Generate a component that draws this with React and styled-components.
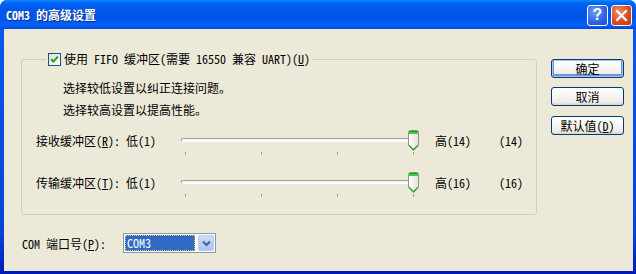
import React from "react";
import styled, { createGlobalStyle } from "styled-components";

const sliders = [
  { name: "接收缓冲区", key: "R", min: 1, max: 14, value: 14 },
  { name: "传输缓冲区", key: "T", min: 1, max: 16, value: 16 },
];

function Thumb() {
  return (
    <svg width="11" height="21" viewBox="0 0 11 21">
      <defs>
        <linearGradient id="tb" x1="0" x2="1" y1="0" y2="0">
          <stop offset="0" stopColor="#FFFFFF" />
          <stop offset="1" stopColor="#E3E2DA" />
        </linearGradient>
      </defs>
      <path
        d="M0.5 2.5 Q0.5 0.5 2.5 0.5 H8.5 Q10.5 0.5 10.5 2.5 V15 L5.5 20.5 L0.5 15 Z"
        fill="url(#tb)"
        stroke="#8F9088"
      />
      <rect x="1" y="1" width="9" height="1" fill="#1B9B1B" />
      <rect x="1" y="2" width="9" height="2" fill="#3DD23D" />
      <path d="M1 15.2 L5.5 19.7 L10 15.2" fill="none" stroke="#2AAE2A" strokeWidth="1.4" />
    </svg>
  );
}

function Slider({ min, max, value }) {
  const frac = (value - min) / (max - min);
  return (
    <SliderBox>
      <ChannelArea>
        <Channel />
        <ThumbWrap style={{ left: `${frac * 228}px` }}>
          <Thumb />
        </ThumbWrap>
      </ChannelArea>
      <Ticks>
        {[0, 1, 2, 3].map((i) => (
          <Tick key={i} />
        ))}
      </Ticks>
    </SliderBox>
  );
}

function App() {
  return (
    <>
      <GlobalStyle />
      <Window>
        <TitleBar>
          <Title>COM3 的高级设置</Title>
          <CaptionButtons>
            <CaptionButton kind="help">?</CaptionButton>
            <CaptionButton kind="close">
              <svg width="19" height="19" viewBox="0 0 19 19">
                <path d="M5 5 L14 14 M14 5 L5 14" stroke="#fff" strokeWidth="2.2" strokeLinecap="square" />
              </svg>
            </CaptionButton>
          </CaptionButtons>
        </TitleBar>
        <Frame>
          <Client>
            <LeftCol>
              <GroupBox>
                <Legend>
                  <CheckBox>
                    <svg width="9" height="9" viewBox="0 0 9 9">
                      <path d="M1.2 4.2 L3.4 6.6 L7.8 1.6" fill="none" stroke="#21A121" strokeWidth="2" />
                    </svg>
                  </CheckBox>
                  <span>
                    使用 FIFO 缓冲区(需要 16550 兼容 UART)(<u>U</u>)
                  </span>
                </Legend>
                <GroupBody>
                  <Note>选择较低设置以纠正连接问题。</Note>
                  <Note>选择较高设置以提高性能。</Note>
                  <Rows>
                    {sliders.map((s) => (
                      <SliderRow key={s.key}>
                        <RowLabel>
                          {s.name}(<u>{s.key}</u>): 低({s.min})
                        </RowLabel>
                        <Slider min={s.min} max={s.max} value={s.value} />
                        <HighLabel>高({s.max})</HighLabel>
                        <ValueLabel>({s.value})</ValueLabel>
                      </SliderRow>
                    ))}
                  </Rows>
                </GroupBody>
              </GroupBox>
              <PortRow>
                <PortLabel>
                  COM 端口号(<u>P</u>):
                </PortLabel>
                <Select>
                  <SelectValue>
                    <span>COM3</span>
                  </SelectValue>
                  <DropButton>
                    <svg width="9" height="7" viewBox="0 0 9 7">
                      <path d="M1 1.5 L4.5 5 L8 1.5" fill="none" stroke="#4D6185" strokeWidth="2" />
                    </svg>
                  </DropButton>
                </Select>
              </PortRow>
            </LeftCol>
            <ButtonCol>
              <Button primary>确定</Button>
              <Button>取消</Button>
              <Button>
                默认值(<u>D</u>)
              </Button>
            </ButtonCol>
          </Client>
        </Frame>
      </Window>
    </>
  );
}

const GlobalStyle = createGlobalStyle`
  html, body {
    margin: 0;
    padding: 0;
    background: #ffffff;
  }
  body {
    font-family: "Noto Sans Mono CJK SC", "Noto Sans CJK SC", "DejaVu Sans", sans-serif;
    font-size: 12px;
    color: #000;
  }
  u {
    text-underline-offset: 1px;
  }
`;

const Window = styled.div`
  width: 636px;
  height: 274px;
  display: flex;
  flex-direction: column;
  background: linear-gradient(to bottom, #0A5AF0, #0843D9 85%, #0019B6);
  border-radius: 7px 7px 0 0;
  overflow: hidden;
`;

const TitleBar = styled.div`
  height: 29px;
  flex: none;
  display: flex;
  align-items: center;
  padding: 1px 4px 0 6px;
  box-sizing: border-box;
  background: linear-gradient(
    to bottom,
    #0A8BFF 0%,
    #0064F4 10%,
    #0058EE 30%,
    #0054E6 60%,
    #0061F8 85%,
    #0057EC 94%,
    #0040D8 100%
  );
`;

const Title = styled.div`
  flex: 1;
  color: #fff;
  font-weight: bold;
  font-size: 12px;
  line-height: 16px;
  text-shadow: 1px 1px 0 #0A2A90;
  white-space: nowrap;
`;

const CaptionButtons = styled.div`
  display: flex;
  gap: 3px;
`;

const CaptionButton = styled.div`
  width: 21px;
  height: 21px;
  box-sizing: border-box;
  border: 1px solid #fff;
  border-radius: 3px;
  display: flex;
  align-items: center;
  justify-content: center;
  color: #fff;
  font-family: "Liberation Sans", sans-serif;
  font-weight: bold;
  font-size: 16px;
  background: ${(p) =>
    p.kind === "close"
      ? "radial-gradient(circle at 35% 30%, #F08C6A, #D9461E 60%, #C0360F)"
      : "radial-gradient(circle at 35% 30%, #6E9CF8, #2A63E6 60%, #1A4CC8)"};
`;

const Frame = styled.div`
  flex: 1;
  display: flex;
  padding: 0 4px 3px 4px;
`;

const Client = styled.div`
  flex: 1;
  display: flex;
  gap: 14px;
  padding: 23px 9px 0 17px;
  background: #ECE9D8;
`;

const LeftCol = styled.div`
  width: 516px;
  display: flex;
  flex-direction: column;
`;

const GroupBox = styled.fieldset`
  margin: 0;
  padding: 0;
  min-width: 0;
  border: 1px solid #D0D0BF;
  border-radius: 3px;
`;

const Legend = styled.legend`
  margin-left: 24px;
  padding: 0 2px;
  display: flex;
  align-items: center;
  gap: 3px;
  height: 14px;
  line-height: 14px;
  white-space: nowrap;
`;

const CheckBox = styled.span`
  width: 13px;
  height: 13px;
  box-sizing: border-box;
  border: 1px solid #1C5180;
  background: linear-gradient(135deg, #DCDCD7, #FFFFFF);
  display: inline-flex;
  align-items: center;
  justify-content: center;
`;

const GroupBody = styled.div`
  padding: 11px 0 17px 14px;
`;

const Note = styled.div`
  margin-left: 27px;
  line-height: 22px;
  height: 22px;
`;

const Rows = styled.div`
  padding-top: 9px;
  display: flex;
  flex-direction: column;
  gap: 17px;
`;

const SliderRow = styled.div`
  display: flex;
  align-items: flex-start;
  height: 25px;
`;

const RowLabel = styled.div`
  width: 144px;
  height: 21px;
  line-height: 21px;
  white-space: nowrap;
`;

const SliderBox = styled.div`
  width: 239px;
`;

const ChannelArea = styled.div`
  position: relative;
  height: 21px;
  padding-top: 8px;
  box-sizing: border-box;
`;

const Channel = styled.div`
  height: 4px;
  box-sizing: border-box;
  margin: 0 1px;
  border-radius: 2px;
  background: #F7F7F5;
  border: 1px solid;
  border-color: #9D9C99 #F4F3EE #FFFFFF #9D9C99;
`;

const ThumbWrap = styled.div`
  position: absolute;
  top: 0;
  width: 11px;
  height: 21px;
  line-height: 0;
`;

const Ticks = styled.div`
  margin-top: 1px;
  padding: 0 5px;
  display: flex;
  justify-content: space-between;
`;

const Tick = styled.div`
  width: 1px;
  height: 3px;
  background: #A4A39B;
`;

const HighLabel = styled.div`
  margin-left: 16px;
  width: 64px;
  height: 21px;
  line-height: 21px;
  white-space: nowrap;
`;

const ValueLabel = styled.div`
  height: 21px;
  line-height: 21px;
  white-space: nowrap;
`;

const PortRow = styled.div`
  margin-top: 18px;
  padding-left: 1px;
  display: flex;
  align-items: center;
`;

const PortLabel = styled.div`
  width: 101px;
  white-space: nowrap;
`;

const Select = styled.div`
  width: 93px;
  height: 20px;
  box-sizing: border-box;
  border: 1px solid #7F9DB9;
  background: #fff;
  display: flex;
  align-items: stretch;
  padding: 1px;
  gap: 3px;
`;

const SelectValue = styled.div`
  flex: 1;
  background: #316AC5;
  color: #fff;
  outline: 1px dotted #E8C440;
  outline-offset: -1px;
  display: flex;
  align-items: center;
  padding-left: 2px;
  line-height: 14px;
`;

const DropButton = styled.div`
  width: 16px;
  border-radius: 2px;
  background: linear-gradient(to bottom, #D0DDFA, #B7CBF6 60%, #AFC4F2);
  border: 1px solid #B9CBF3;
  box-sizing: border-box;
  display: flex;
  align-items: center;
  justify-content: center;
`;

const ButtonCol = styled.div`
  padding-top: 7px;
  display: flex;
  flex-direction: column;
  gap: 9px;

  & > :last-child {
    margin-top: 1px;
  }
`;

const Button = styled.div`
  width: 73px;
  height: 19px;
  box-sizing: border-box;
  border: 1px solid #003C74;
  border-radius: 3px;
  background: linear-gradient(to bottom, #FFFFFF 0%, #F6F5F1 50%, #ECEBE5 85%, #D8D2C6 100%);
  box-shadow: ${(p) =>
    p.primary ? "inset 0 0 0 1px #A6C2EE, inset 0 -1px 0 2px #6E94DA" : "none"};
  display: flex;
  align-items: center;
  justify-content: center;
  line-height: 14px;
  white-space: nowrap;
`;

export default App;
